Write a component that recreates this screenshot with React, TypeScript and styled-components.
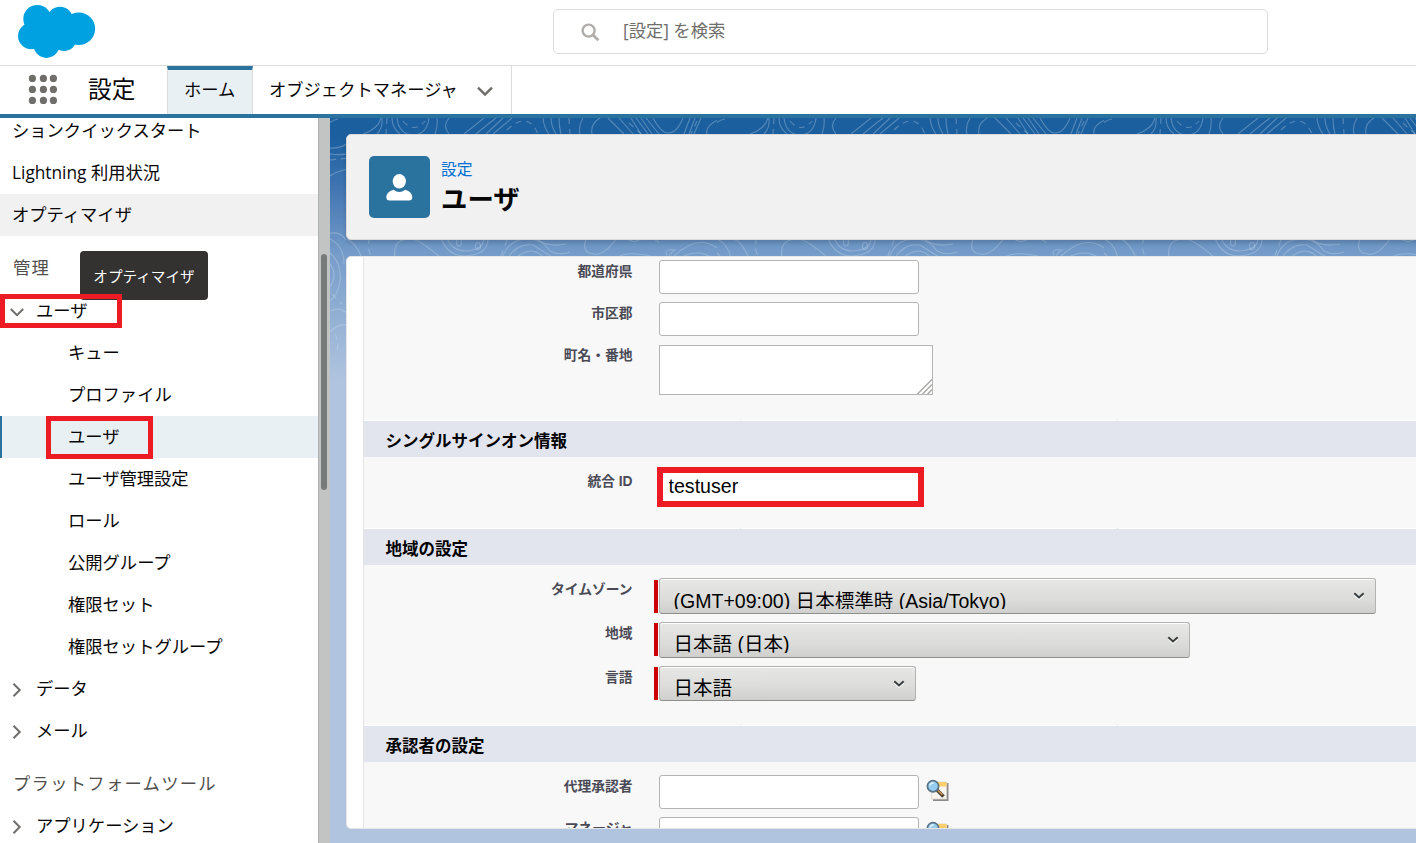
import React from "react";
import styled, { createGlobalStyle, css } from "styled-components";

const GlobalStyle = createGlobalStyle`
  *, *::before, *::after { box-sizing: border-box; }
  html, body { margin: 0; padding: 0; overflow: hidden; }
  body {
    font-family: "Open Sans", "Noto Sans CJK JP", sans-serif;
    font-size: 17.3px;
    color: #080707;
    background: #fff;
  }
`;

const Page = styled.div`
  display: flex;
  flex-direction: column;
  width: 1416px;
  height: 843px;
  overflow: hidden;
  white-space: nowrap;
`;

const TopBar = styled.header`
  display: flex;
  align-items: flex-start;
  flex: none;
  height: 66px;
  border-bottom: 1px solid #dddbda;
`;

const Logo = styled.svg`
  flex: none;
  width: 80px;
  height: 60px;
  margin-left: 17px;
`;

const SearchBox = styled.div`
  display: flex;
  align-items: center;
  width: 715px;
  height: 45px;
  margin: 9px 0 0 456px;
  padding: 0 0 4px 27px;
  border: 1px solid #dddbda;
  border-radius: 5px;
  color: #706e6b;

  svg { margin: 5px 23px 0 0; }
`;

const NavBar = styled.nav`
  display: flex;
  flex: none;
  height: 52px;
  border-bottom: 4px solid #2a739e;
`;

const Launcher = styled.svg`
  flex: none;
  width: 30px;
  height: 30px;
  margin: 8px 30px 0 28px;
`;

const AppName = styled.div`
  width: 79px;
  font-size: 23.7px;
  line-height: 46px;
`;

const NavTab = styled.div<{ $active?: boolean; $width: number }>`
  display: flex;
  width: ${(p) => p.$width}px;
  padding-left: 16px;
  line-height: 47px;
  border-right: 1px solid #dddbda;

  svg { margin: 16px 0 0 18px; }

  ${(p) =>
    p.$active &&
    css`
      padding-left: 16px;
      line-height: 39px;
      border-left: 1px solid #dddbda;
      border-top: 4px solid #2a739e;
      background: #e8f0f4;
    `}
`;

const Body = styled.div`
  display: flex;
  flex: 1;
  min-height: 0;
`;

const Sidebar = styled.aside`
  position: relative;
  width: 318px;
  overflow: hidden;
`;

const Tree = styled.div`
  margin-top: -8px;
`;

const TreeRow = styled.div<{ $level?: 0 | 1 | 2; $hover?: boolean; $selected?: boolean }>`
  display: flex;
  align-items: center;
  height: 42px;
  padding-bottom: 3px;
  padding-left: ${(p) => (p.$level === 2 ? 68 : p.$level === 1 ? 9 : 12)}px;
  ${(p) => p.$hover && "background: #f1f1f1;"}
  ${(p) => p.$selected && "background: #e8f0f4; box-shadow: inset 2px 0 #2a739e;"}

  svg { margin: 5px 11px 0 0; }
`;

const TreeHeading = styled.div<{ $height: number }>`
  height: ${(p) => p.$height}px;
  padding: 11px 0 0 13px;
  line-height: 42px;
  letter-spacing: 1.3px;
  color: #514f4d;
`;

const Tooltip = styled.div`
  position: absolute;
  left: 80px;
  top: 133px;
  width: 128px;
  height: 49px;
  border-radius: 4px;
  background: #333231;
  color: #fff;
  font-size: 14.6px;
  line-height: 51px;
  text-align: center;
`;

const Marker = styled.div<{ $x: number; $y: number; $w: number; $h: number; $border: number }>`
  position: absolute;
  left: ${(p) => p.$x}px;
  top: ${(p) => p.$y}px;
  width: ${(p) => p.$w}px;
  height: ${(p) => p.$h}px;
  border: ${(p) => p.$border}px solid #ed1c24;
  pointer-events: none;
`;

const Scrollbar = styled.div`
  width: 12px;
  padding: 136px 3px 0 2px;
  border-left: 1px solid #aeb1b0;
  background: #c1c4c2;
`;

const ScrollThumb = styled.div`
  width: 6px;
  height: 236px;
  border-radius: 3px;
  background: #777c7b;
`;

const Content = styled.main`
  position: relative;
  display: flex;
  flex-direction: column;
  flex: 1;
  min-width: 0;
  padding: 16px 0 14px 16px;
  overflow: hidden;
  background: linear-gradient(#1b5f9f 0, #1b5f9f 20px, #4175b2 70px, #779dc9 138px, #b0c4df 262px);
`;

const Backdrop = styled.svg`
  position: absolute;
  left: 0;
  top: 0;
  width: 100%;
  height: 300px;
`;

const HeaderCard = styled.section`
  position: relative;
  display: flex;
  flex: none;
  width: 1200px;
  height: 106px;
  padding: 21px 0 0 22px;
  border: 1px solid #dddbda;
  border-radius: 5px;
  background: #f1f1f1;
  box-shadow: 0 3px 4px rgba(0, 0, 0, 0.16);
`;

const UserTile = styled.div`
  width: 61px;
  height: 62px;
  border-radius: 5px;
  background: #2a739e;
`;

const HeaderText = styled.div`
  padding-left: 11px;
`;

const Eyebrow = styled.div`
  height: 26px;
  font-size: 15.8px;
  line-height: 26px;
  color: #0070d2;
`;

const Title = styled.h1`
  margin: 0;
  font-size: 26.4px;
  font-weight: 700;
  line-height: 34px;
`;

const FormCard = styled.section`
  position: relative;
  flex: 1;
  width: 1200px;
  min-height: 0;
  margin-top: 16px;
  padding-left: 16px;
  overflow: hidden;
  border: 1px solid #e6e6e8;
  border-radius: 5px;
  background: #fff;
`;

const FormSheet = styled.div`
  position: relative;
  height: 640px;
  border-left: 1px solid #e4e4e6;
  background: #f8f8f8;
  font-family: "Liberation Sans", "Noto Sans CJK JP", sans-serif;
`;

const SectionTitle = styled.h2`
  height: 36px;
  margin: 0;
  padding-left: 21.5px;
  background: #e2e5ee;
  color: #000;
  font-size: 16.5px;
  font-weight: 700;
  line-height: 40px;
`;

const Divider = styled.div`
  height: 1px;
  background: repeating-linear-gradient(90deg, #fff 0 376px, #e2e5ea 376px 377px);
`;

const Fields = styled.div<{ $height: number; $top?: number }>`
  display: flex;
  flex-direction: column;
  height: ${(p) => p.$height}px;
  padding-top: ${(p) => p.$top ?? 13}px;
`;

const Field = styled.div<{ $height?: number }>`
  display: flex;
  flex: none;
  align-items: flex-start;
  height: ${(p) => p.$height ?? 42}px;
`;

const Label = styled.label`
  width: 268.5px;
  margin-right: 21.5px;
  color: #4a4a56;
  font-size: 13.75px;
  font-weight: 700;
  line-height: 24px;
  text-align: right;
`;

const Required = styled.span<{ $top: number }>`
  width: 4px;
  height: 33px;
  margin: ${(p) => p.$top}px 1px 0 0;
  background: #c00;
`;

const Input = styled.input`
  width: 260px;
  height: 34px;
  margin: 0 0 0 5px;
  padding: 0 8.5px 2px;
  border: 1px solid #b4b4b2;
  border-radius: 3px;
  background: #fff;
  color: #000;
  font-family: inherit;
  font-size: 19.6px;
  outline: none;
`;

const Area = styled.div`
  display: flex;
  align-items: flex-end;
  justify-content: flex-end;
  width: 274px;
  height: 50px;
  margin: 1px 0 0 5px;
  border: 1px solid #b4b4b2;
  background: #fff;
`;

const Select = styled.div<{ $width: number; $height: number }>`
  display: flex;
  justify-content: space-between;
  width: ${(p) => p.$width}px;
  height: ${(p) => p.$height}px;
  padding: 1px 10px 0 13.5px;
  border: 1px solid #b1b3b0;
  border-bottom-color: #8c8f8a;
  border-radius: 3px;
  background: linear-gradient(#e7e8e6, #dcdddb 60%, #cfd0cd);
  box-shadow: inset 0 1px #fff;
  color: #000;
  font-size: 19.55px;

  svg { margin-top: 11px; }
`;

const SelectText = styled.span<{ $top: number }>`
  height: 29px;
  overflow: hidden;
  line-height: 29px;
  padding-top: ${(p) => p.$top}px;
`;

const LookupIcon = styled.svg`
  width: 24px;
  height: 24px;
  margin: 4px 0 0 7px;
`;

const Chevron = ({ open, size = 16, w = 2 }: { open?: boolean; size?: number; w?: number }) => (
  <svg width={size} height={size} viewBox="0 0 16 16" fill="none" stroke="#706e6b" strokeWidth={w}>
    <path d={open ? "M1.8 5 L8 11.2 L14.2 5" : "M4.5 1.8 L10.7 8 L4.5 14.2"} />
  </svg>
);

const SelectArrow = () => (
  <svg width="12" height="10" viewBox="0 0 12 10" fill="none" strokeWidth="2">
    <path d="M1.3 3.5 L6 7.8 L10.7 3.5" stroke="#f6f6f6" />
    <path d="M1.3 2.2 L6 6.4 L10.7 2.2" stroke="#3a3f42" />
  </svg>
);

const Lookup = () => (
  <LookupIcon viewBox="0 0 24 24">
    <rect x="7" y="4" width="15.5" height="18" fill="#8b8b8b" />
    <rect x="5.5" y="3" width="15" height="17" fill="#f7f5ee" stroke="#d8d5cc" strokeWidth=".8" />
    <rect x="9" y="3" width="11.5" height="4.5" fill="#ffcf6b" />
    <path d="M11 11 L17.5 17.5" stroke="#4d4238" strokeWidth="3.6" />
    <path d="M12 11.5 L16.5 15.8" stroke="#d99a52" strokeWidth="1.4" />
    <circle cx="7" cy="7.2" r="5.6" fill="#94cdf0" stroke="#5c7286" strokeWidth="1.7" />
    <path d="M3.8 6.5 Q5 3.8 7.8 3.7" stroke="#e2f4fd" strokeWidth="1.6" fill="none" />
  </LookupIcon>
);

const contours = [
  "M-3 8 Q1 2 8 1",
  "M33 16 Q48 11 51 0",
  "M47 16 Q53 10 52 0",
  "M62 0 Q62 10 70 16",
  "M67 0 Q69 17 84 17 Q97 16 99 0",
  "M105 16 Q108 8 107 0",
  "M119 0 Q112 8 119 16",
  "M134 16 L154 0",
  "M146 16 Q158 6 166 0",
  "M156 16 L173 0",
  "M163 16 L182 0",
  "M213 0 Q214 10 219 16",
  "M221 0 Q221 8 226 16",
  "M229 0 Q229 9 231 16",
  "M253 0 Q248 8 250 16",
  "M270 0 Q260 6 262 16",
  "M278 0 L294 16",
  "M289 0 L303 16",
  "M301 0 L311 16",
  "M306 0 L318 16",
  "M311 0 L322 16",
  "M316 0 L329 16",
  "M323 0 Q331 15 338 15 Q347 15 353 0",
  "M360 0 L354 16",
  "M365 0 L359 16",
  "M371 0 L364 16",
  "M393 0 Q375 6 377 16",
  "M0 30 Q12 31 20 23",
  "M0 36 Q12 38 24 34",
  "M0 58 Q9 52 20 51",
  "M-3 116 Q10 112 16 122",
  "M0 121 Q14 128 14 146",
  "M17 121 Q26 125 32 140",
  "M65 140 Q62 121 80 121 Q88 120 110 139",
  "M111 120 Q117 137 134 138 Q158 137 158 121",
  "M117 120 Q122 133 136 133 Q154 132 154 120",
  "M172 140 Q179 120 199 121 Q213 122 220 133 Q230 138 240 134",
  "M178 140 Q187 125 203 127 L222 139",
  "M186 140 Q202 126 214 140",
  "M206 120 Q217 130 236 126",
  "M256 121 Q251 135 264 136 Q274 138 287 120",
  "M286 140 Q298 132 324 139",
  "M296 120 Q304 127 312 120",
  "M338 140 Q332 130 345 132 Q338 136 340 140 M344 138 Q374 110 397 140",
  "M350 140 Q368 130 382 140",
  "M0 135 Q12 145 10 164 Q7 180 -2 184",
  "M0 146 Q8 156 0 169",
  "M0 193 Q10 188 18 196",
  "M0 214 Q8 205 20 207",
];

const dashes = [
  "M57 0 L56 16",
  "M73 3 Q84 16 95 3",
  "M177 12 Q198 -8 208 16",
  "M239 0 L240 16",
  "M299 5 L311 16",
  "M367 3 L361 16",
  "M0 42 L20 40",
  "M40 120 Q36 130 42 140",
  "M177 122 L170 140",
  "M324 121 L330 125",
  "M2 176 L12 186",
  "M5 216 Q10 226 6 236",
];

const App = () => (
  <>
    <GlobalStyle />
    <Page>
      <TopBar>
        <Logo viewBox="17 0 80 60" fill="#00a1e0">
          <circle cx="37.3" cy="19" r="14" />
          <circle cx="60" cy="19.6" r="12.9" />
          <circle cx="78.8" cy="28.7" r="16.3" />
          <circle cx="31.2" cy="36" r="13.2" />
          <circle cx="46.5" cy="45" r="12.9" />
          <circle cx="64" cy="38.3" r="12.7" />
          <rect x="34" y="18" width="36" height="24" />
        </Logo>
        <SearchBox>
          <svg width="19" height="19" viewBox="0 0 19 19" fill="none" stroke="#b0adab">
            <circle cx="7.6" cy="7.6" r="6" strokeWidth="2.4" />
            <path d="M12 12 L17.3 17.3" strokeWidth="2.8" />
          </svg>
          [設定] を検索
        </SearchBox>
      </TopBar>

      <NavBar>
        <Launcher viewBox="28 74 30 30" fill="#706e6b">
          {[78.4, 89.4, 100.4].map((cy) =>
            [32.4, 43.4, 53.4].map((cx) => <circle key={`${cx}-${cy}`} cx={cx} cy={cy} r="3.6" />)
          )}
        </Launcher>
        <AppName>設定</AppName>
        <NavTab $active $width={86}>ホーム</NavTab>
        <NavTab $width={259}>
          オブジェクトマネージャ
          <Chevron open size={18} w={2.2} />
        </NavTab>
      </NavBar>

      <Body>
        <Sidebar>
          <Tree>
            <TreeRow>ションクイックスタート</TreeRow>
            <TreeRow>Lightning 利用状況</TreeRow>
            <TreeRow $hover>オプティマイザ</TreeRow>
            <TreeHeading $height={54}>管理</TreeHeading>
            <TreeRow $level={1}><Chevron open />ユーザ</TreeRow>
            <TreeRow $level={2}>キュー</TreeRow>
            <TreeRow $level={2}>プロファイル</TreeRow>
            <TreeRow $level={2} $selected>ユーザ</TreeRow>
            <TreeRow $level={2}>ユーザ管理設定</TreeRow>
            <TreeRow $level={2}>ロール</TreeRow>
            <TreeRow $level={2}>公開グループ</TreeRow>
            <TreeRow $level={2}>権限セット</TreeRow>
            <TreeRow $level={2}>権限セットグループ</TreeRow>
            <TreeRow $level={1}><Chevron />データ</TreeRow>
            <TreeRow $level={1}><Chevron />メール</TreeRow>
            <TreeHeading $height={53}>プラットフォームツール</TreeHeading>
            <TreeRow $level={1}><Chevron />アプリケーション</TreeRow>
          </Tree>
          <Tooltip>オプティマイザ</Tooltip>
          <Marker $x={0} $y={176} $w={122} $h={34} $border={5} />
          <Marker $x={46} $y={298} $w={107} $h={43} $border={5} />
        </Sidebar>
        <Scrollbar>
          <ScrollThumb />
        </Scrollbar>

        <Content>
          <Backdrop fill="none" stroke="#d5e6f7" strokeOpacity=".3" strokeWidth="1.1">
            <defs>
              <pattern id="topo" width="387" height="300" patternUnits="userSpaceOnUse">
                {contours.map((d) => <path key={d} d={d} />)}
                {dashes.map((d) => <path key={d} d={d} strokeDasharray="6 5" />)}
                <ellipse cx="129" cy="124" rx="2.5" ry="4" />
                <ellipse cx="148" cy="128" rx="2.5" ry="3.5" />
              </pattern>
            </defs>
            <rect width="100%" height="300" fill="url(#topo)" stroke="none" />
          </Backdrop>

          <HeaderCard>
            <UserTile>
              <svg width="61" height="62" viewBox="0 0 61 62" fill="#fff">
                <ellipse cx="30.3" cy="25.3" rx="6.6" ry="7.2" />
                <path d="M24.5 33.8 Q30.3 38.2 36.2 33.8 Q43.3 36 43.3 41 Q43.3 44.6 40 44.6 H20.6 Q17.3 44.6 17.3 41 Q17.3 36 24.5 33.8 Z" />
              </svg>
            </UserTile>
            <HeaderText>
              <Eyebrow>設定</Eyebrow>
              <Title>ユーザ</Title>
            </HeaderText>
          </HeaderCard>

          <FormCard>
            <FormSheet>
              <Fields $height={163} $top={3}>
                <Field><Label>都道府県</Label><Input /></Field>
                <Field><Label>市区郡</Label><Input /></Field>
                <Field $height={52}>
                  <Label>町名・番地</Label>
                  <Area>
                    <svg width="15" height="15" viewBox="0 0 15 15" stroke="#a9aaa8" strokeWidth="1.5">
                      <path d="M0.5 15 L15 0.5 M5.5 15 L15 5.5 M10.5 15 L15 10.5" />
                    </svg>
                  </Area>
                </Field>
              </Fields>
              <Divider />
              <SectionTitle>シングルサインオン情報</SectionTitle>
              <Fields $height={71}>
                <Field><Label>統合 ID</Label><Input defaultValue="testuser" /></Field>
              </Fields>
              <Divider />
              <SectionTitle>地域の設定</SectionTitle>
              <Fields $height={160}>
                <Field $height={44}>
                  <Label>タイムゾーン</Label>
                  <Required $top={2} />
                  <Select $width={717} $height={36}>
                    <SelectText $top={7}>(GMT+09:00) 日本標準時 (Asia/Tokyo)</SelectText>
                    <SelectArrow />
                  </Select>
                </Field>
                <Field $height={44}>
                  <Label>地域</Label>
                  <Required $top={1} />
                  <Select $width={531} $height={36}>
                    <SelectText $top={6}>日本語 (日本)</SelectText>
                    <SelectArrow />
                  </Select>
                </Field>
                <Field>
                  <Label>言語</Label>
                  <Required $top={1} />
                  <Select $width={257} $height={35}>
                    <SelectText $top={6}>日本語</SelectText>
                    <SelectArrow />
                  </Select>
                </Field>
              </Fields>
              <Divider />
              <SectionTitle>承認者の設定</SectionTitle>
              <Fields $height={120}>
                <Field><Label>代理承認者</Label><Input /><Lookup /></Field>
                <Field><Label>マネージャ</Label><Input /><Lookup /></Field>
              </Fields>
              <Marker $x={293} $y={210} $w={267} $h={40} $border={6} />
            </FormSheet>
          </FormCard>
        </Content>
      </Body>
    </Page>
  </>
);

export default App;
